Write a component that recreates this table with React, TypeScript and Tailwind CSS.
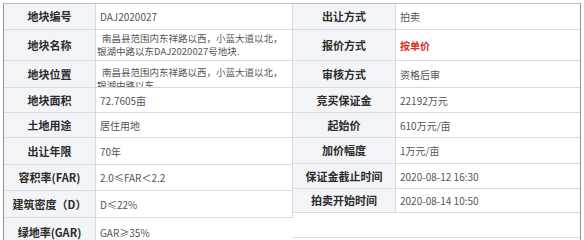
import React from "react";

type Row = { label: string; value: React.ReactNode; h: string; valueClass?: string };

const FONT = { fontFamily: '"Noto Sans CJK SC", "Noto Sans", sans-serif' };

function Cell({ row, labelW }: { row: Row; labelW: string }) {
  return (
    <div className={`flex ${row.h} border-b border-[#d6dbe0]`}>
      <div
        className={`${labelW} shrink-0 flex items-center justify-center bg-[#f2f4f7] text-[11px] font-bold text-[#2b2b2b] whitespace-nowrap`}
      >
        {row.label}
      </div>
      <div
        className={`flex-1 min-w-0 overflow-hidden border-l border-[#d6dbe0] bg-white text-[10px] text-[#555] ${
          row.valueClass ?? "flex items-center pl-[4px]"
        }`}
      >
        {row.value}
      </div>
    </div>
  );
}

export default function App() {
  const left: Row[] = [
    { label: "地块编号", value: "DAJ2020027", h: "h-[26px]" },
    {
      label: "地块名称",
      value: (
        <div className="leading-[13px] text-[9.5px]">
          <div className="pl-[5px]">南昌县范围内东祥路以西，小蓝大道以北，</div>
          <div>银湖中路以东DAJ2020027号地块.</div>
        </div>
      ),
      h: "h-[31px]",
      valueClass: "flex items-center pl-[1px]",
    },
    {
      label: "地块位置",
      value: (
        <div className="leading-[13px] text-[9.5px]">
          <div className="pl-[5px]">南昌县范围内东祥路以西，小蓝大道以北，</div>
          <div>银湖中路以东</div>
        </div>
      ),
      h: "h-[27px]",
      valueClass: "pt-[5px] pl-[1px]",
    },
    { label: "地块面积", value: "72.7605亩", h: "h-[25px]" },
    { label: "土地用途", value: "居住用地", h: "h-[25px]" },
    { label: "出让年限", value: "70年", h: "h-[27px]" },
    { label: "容积率(FAR)", value: "2.0≤FAR＜2.2", h: "h-[26px]" },
    { label: "建筑密度（D）", value: "D≤22%", h: "h-[27px]" },
  ];
  const right: Row[] = [
    { label: "出让方式", value: "拍卖", h: "h-[26px]" },
    {
      label: "报价方式",
      value: <span className="text-[#e02b27] font-semibold">按单价</span>,
      h: "h-[31px]",
    },
    { label: "审核方式", value: "资格后审", h: "h-[27px]" },
    { label: "竞买保证金", value: "22192万元", h: "h-[25px]" },
    { label: "起始价", value: "610万元/亩", h: "h-[25px]" },
    { label: "加价幅度", value: "1万元/亩", h: "h-[26px]" },
    { label: "保证金截止时间", value: "2020-08-12 16:30", h: "h-[25px]" },
    { label: "拍卖开始时间", value: "2020-08-14 10:50", h: "h-[24px]" },
  ];

  return (
    <div className="w-[584px] h-[240px] overflow-hidden bg-white" style={FONT}>
      <div className="ml-[3px] mt-[3px] w-[578px] h-[260px] border border-t-[#b7bec7] border-l-[#8e959e] border-r-[#8e959e] border-b-[#8e959e] flex">
        <div className="w-[289px] flex flex-col">
          {left.map((r, i) => (
            <div key={i} className="border-r border-[#d6dbe0]">
              <Cell row={r} labelW="w-[91px]" />
            </div>
          ))}
          <div className="flex h-[30px] border-b border-[#d6dbe0]">
            <div className="w-[91px] shrink-0 flex items-center justify-center bg-[#f2f4f7] text-[11px] font-bold text-[#2b2b2b] whitespace-nowrap">
              绿地率(GAR)
            </div>
            <div className="flex-1 flex items-center pl-[4px] border-l border-[#d6dbe0] bg-white text-[10px] text-[#555]">
              GAR≥35%
            </div>
          </div>
        </div>
        <div className="flex-1 flex flex-col">
          {right.map((r, i) => (
            <Cell key={i} row={r} labelW="w-[102px]" />
          ))}
          <div className="h-[25px] border-b border-[#d6dbe0] bg-white" />
        </div>
      </div>
    </div>
  );
}
